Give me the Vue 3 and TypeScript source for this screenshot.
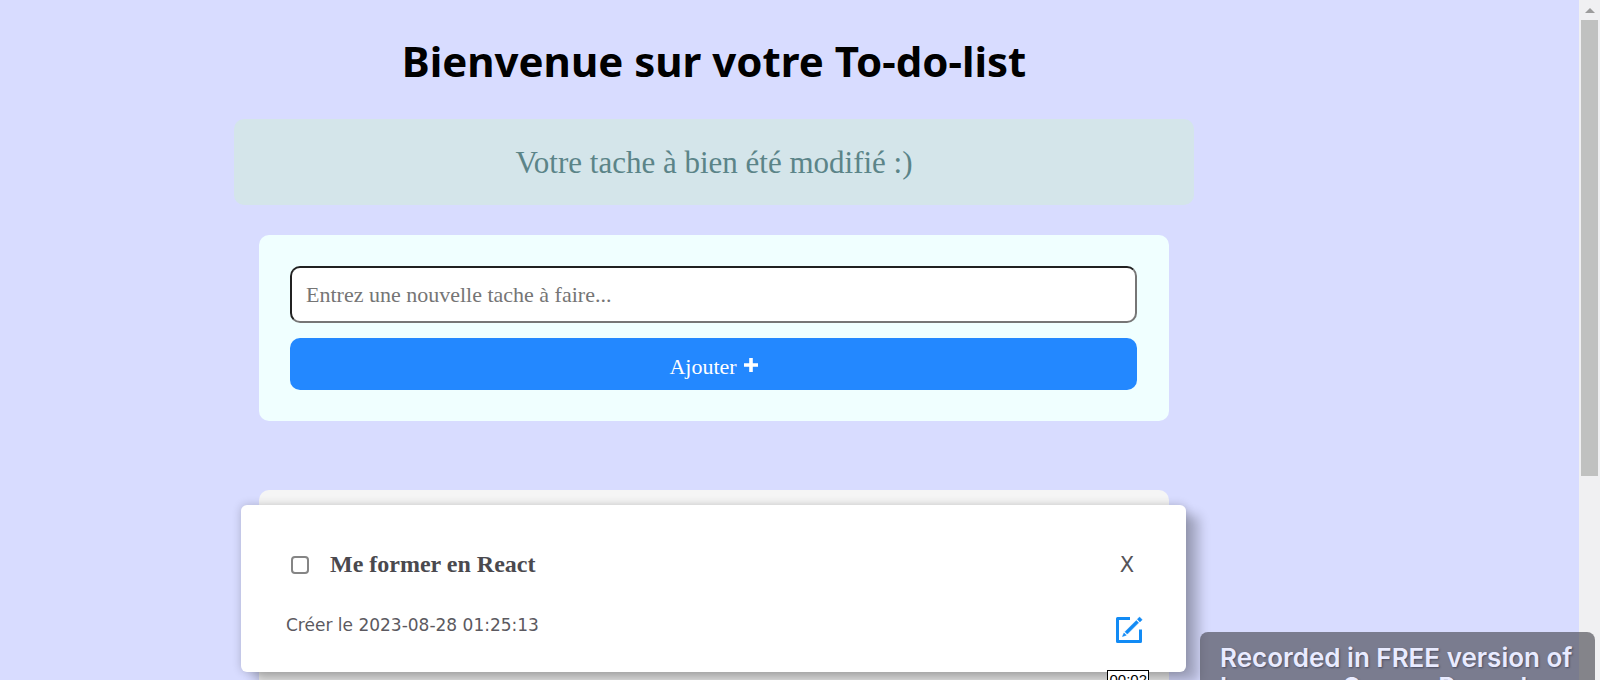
<script setup lang="ts">
import { ref } from 'vue'

interface Task {
  id: number
  label: string
  createdAt: string
  done: boolean
}

const draft = ref('')
const notice = ref('Votre tache à bien été modifié :)')
const tasks = ref<Task[]>([
  { id: 1, label: 'Me former en React', createdAt: '2023-08-28 01:25:13', done: false },
])

function addTask(): void {
  const label = draft.value.trim()
  if (!label) return
  tasks.value.push({
    id: Date.now(),
    label,
    createdAt: new Date().toISOString().slice(0, 19).replace('T', ' '),
    done: false,
  })
  draft.value = ''
}

function removeTask(id: number): void {
  tasks.value = tasks.value.filter((task) => task.id !== id)
}
</script>

<template>
  <div class="screen">
    <main class="page">
      <h1 class="title">Bienvenue sur votre To-do-list</h1>
      <p class="notice" role="status">{{ notice }}</p>

      <form class="panel add-form" @submit.prevent="addTask">
        <input
          v-model="draft"
          class="field"
          type="text"
          aria-label="Nouvelle tache"
          placeholder="Entrez une nouvelle tache à faire..."
        />
        <button class="add" type="submit">
          Ajouter
          <svg class="plus" viewBox="0 0 14 14" aria-hidden="true">
            <path d="M5.200 0h3.600v5.200H14v3.600H8.800V14H5.200V8.800H0V5.200h5.200z" />
          </svg>
        </button>
      </form>

      <section class="panel list">
        <article v-for="task in tasks" :key="task.id" class="task">
          <div class="row">
            <input :id="`task-${task.id}`" v-model="task.done" class="check" type="checkbox" />
            <label class="label" :for="`task-${task.id}`">{{ task.label }}</label>
            <button class="remove" type="button" @click="removeTask(task.id)">X</button>
          </div>
          <div class="row meta">
            <span class="date">Créer le {{ task.createdAt }}</span>
            <button class="edit" type="button" aria-label="Modifier">
              <svg viewBox="0 0 28 28" aria-hidden="true">
                <path class="frame" d="M15 2.500H2.500v23h23V13.500" />
                <path class="pencil" d="M10 15.800 21.300 4.500 23.600 6.800 12.300 18.100z" />
                <path class="pencil" d="M9 16.900 11.300 19.200 7.500 20.500z" />
                <path class="pencil" d="M22.300 3.300 24.500 1.100 27.200 3.700 24.900 6z" />
              </svg>
            </button>
          </div>
        </article>
      </section>
    </main>

    <div class="scrollbar" aria-hidden="true">
      <span class="arrow"></span>
      <span class="thumb"></span>
    </div>

    <div class="timer">00:02</div>
    <aside class="watermark">Recorded in FREE version of<br />Icecream Screen Recorder</aside>
  </div>
</template>

<style>
body {
  margin: 0;
}
</style>

<style scoped>
.screen {
  position: relative;
  display: flex;
  height: 100vh;
  overflow: hidden;
  background: #d8dcff;
  font-family: "Liberation Serif", serif;
}

.page {
  box-sizing: border-box;
  flex: 1;
  min-width: 0;
  padding: 30px 151px 0 0;
  display: flex;
  flex-direction: column;
  align-items: center;
}

.title {
  margin: 0;
  color: #000;
  font: 700 42px/62px "Noto Sans", "Open Sans", sans-serif;
}

.notice {
  box-sizing: border-box;
  width: 100%;
  max-width: 960px;
  margin: 27px 0 30px;
  padding: 23px 22px 22px;
  border-radius: 10px;
  background: #d4e5ea;
  color: #5b8488;
  font-size: 31px;
  line-height: 41px;
  text-align: center;
}

.panel {
  box-sizing: border-box;
  width: 100%;
  max-width: 910px;
  border-radius: 10px;
}

.add-form {
  display: flex;
  flex-direction: column;
  gap: 15px;
  padding: 31px 32px 31px 31px;
  background: #f0ffff;
}

.field {
  box-sizing: border-box;
  width: 100%;
  height: 57px;
  padding: 0 14px;
  border: 2px inset #767676;
  border-radius: 10px;
  background: #fff;
  font: 22px/26px "Liberation Serif", serif;
}

.field::placeholder {
  color: #757575;
}

.add {
  display: flex;
  align-items: center;
  justify-content: center;
  gap: 7px;
  height: 52px;
  padding: 5px 0 0;
  border: 0;
  border-radius: 10px;
  background: #2388ff;
  color: #fff;
  font: 22px/26px "Liberation Serif", serif;
}

.plus {
  width: 14px;
  height: 14px;
  margin-bottom: 4px;
  fill: #fff;
}

.list {
  flex: 1 0 240px;
  margin-top: 69px;
  padding-top: 15px;
  background: #f5f5f5;
}

.task {
  box-sizing: border-box;
  height: 167px;
  margin: 0 -17px 0 -18px;
  padding: 43px 43px 0 45px;
  border-radius: 6px;
  background: #fff;
  box-shadow: 13px 10px 12px rgba(0, 0, 0, 0.24), 0 0 10px rgba(0, 0, 0, 0.2);
}

.row {
  display: flex;
  align-items: center;
  height: 34px;
}

.check {
  appearance: none;
  box-sizing: border-box;
  width: 18px;
  height: 18px;
  margin: 0 21px 0 5px;
  border: 2px solid #858585;
  border-radius: 4px;
  background: #fff;
}

.label {
  flex: 1;
  padding-bottom: 2px;
  color: #4a494e;
  font-size: 24px;
  font-weight: 700;
}

.remove,
.edit {
  padding: 0;
  border: 0;
  background: none;
}

.remove {
  width: 32px;
  color: #555358;
  font: 21px/26px "DejaVu Sans", sans-serif;
}

.meta {
  align-items: flex-start;
  justify-content: space-between;
  margin-top: 34px;
}

.date {
  color: #5b5960;
  font: 17px/18px "DejaVu Sans", sans-serif;
}

.edit {
  width: 28px;
  height: 28px;
}

.edit svg {
  display: block;
}

.frame {
  fill: none;
  stroke: #128bf5;
  stroke-width: 3;
  stroke-linejoin: round;
}

.pencil {
  fill: #128bf5;
  stroke: #128bf5;
  stroke-width: 0.5;
}

.scrollbar {
  box-sizing: border-box;
  width: 21px;
  padding: 8px 2px 0;
  display: flex;
  flex-direction: column;
  align-items: center;
  gap: 7px;
  background: #f0f0f2;
}

.arrow {
  border: 5px solid transparent;
  border-top: 0;
  border-bottom-color: #9c9c9c;
}

.thumb {
  width: 100%;
  height: 67vh;
  background: #c0c1c0;
}

.timer {
  position: absolute;
  right: 451px;
  bottom: -10px;
  padding: 0 1px;
  border: 1px solid #000;
  background: #fff;
  color: #000;
  font: 15px/18px "Liberation Sans", sans-serif;
}

.watermark {
  position: absolute;
  right: 5px;
  bottom: -20px;
  box-sizing: border-box;
  width: 395px;
  height: 68px;
  padding: 11px 0 0 20px;
  overflow: hidden;
  border-radius: 8px;
  background: rgba(60, 60, 68, 0.6);
  color: #e9ebff;
  font: 600 26px/29px Inter, sans-serif;
  text-shadow: 1px 1px 2px #4a4c60;
  white-space: nowrap;
}
</style>
